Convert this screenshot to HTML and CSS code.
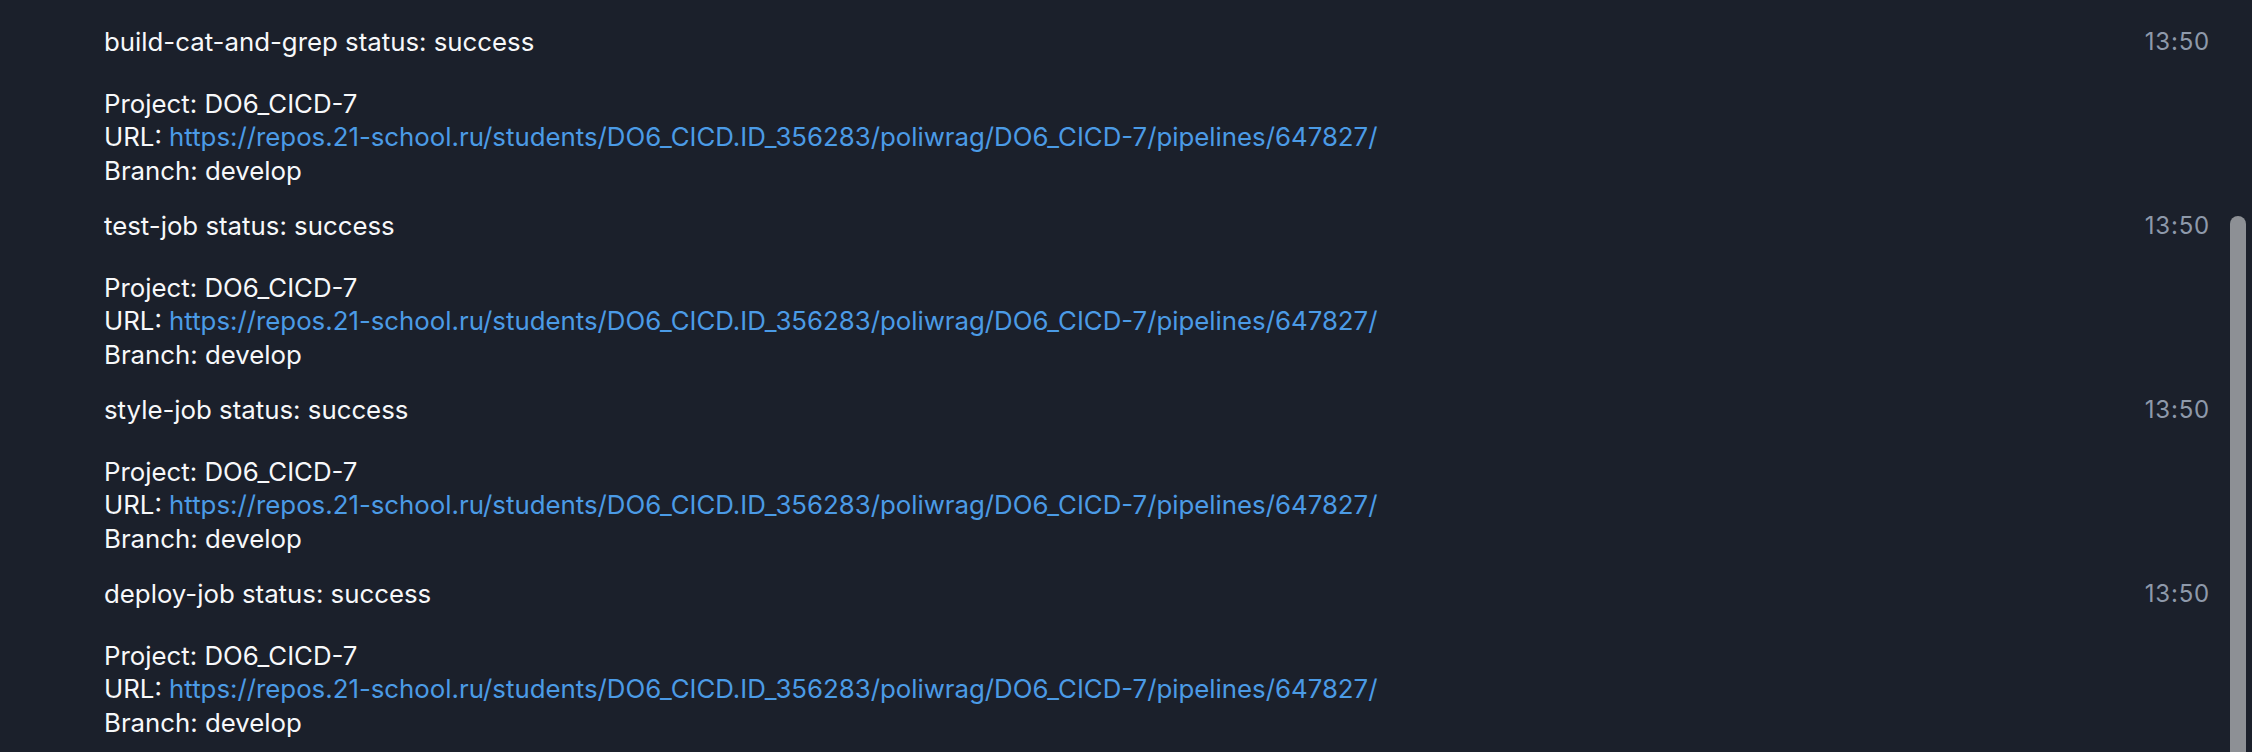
FILE: index.html
```html
<!DOCTYPE html>
<html>
<head>
<meta charset="utf-8">
<link rel="stylesheet" href="styles.css">
</head>
<body>
<div class="chat">
  <div class="msg">
    <div class="text">
      <div>build-cat-and-grep status: success</div>
      <div class="blank"></div>
      <div>Project: DO6_CICD-7</div>
      <div>URL: <a class="link">https://repos.21-school.ru/students/DO6_CICD.ID_356283/poliwrag/DO6_CICD-7/pipelines/647827/</a></div>
      <div>Branch: develop</div>
    </div>
    <div class="time">13:50</div>
  </div>
  <div class="msg">
    <div class="text">
      <div>test-job status: success</div>
      <div class="blank"></div>
      <div>Project: DO6_CICD-7</div>
      <div>URL: <a class="link">https://repos.21-school.ru/students/DO6_CICD.ID_356283/poliwrag/DO6_CICD-7/pipelines/647827/</a></div>
      <div>Branch: develop</div>
    </div>
    <div class="time">13:50</div>
  </div>
  <div class="msg">
    <div class="text">
      <div>style-job status: success</div>
      <div class="blank"></div>
      <div>Project: DO6_CICD-7</div>
      <div>URL: <a class="link">https://repos.21-school.ru/students/DO6_CICD.ID_356283/poliwrag/DO6_CICD-7/pipelines/647827/</a></div>
      <div>Branch: develop</div>
    </div>
    <div class="time">13:50</div>
  </div>
  <div class="msg">
    <div class="text">
      <div>deploy-job status: success</div>
      <div class="blank"></div>
      <div>Project: DO6_CICD-7</div>
      <div>URL: <a class="link">https://repos.21-school.ru/students/DO6_CICD.ID_356283/poliwrag/DO6_CICD-7/pipelines/647827/</a></div>
      <div>Branch: develop</div>
    </div>
    <div class="time">13:50</div>
  </div>
  <div class="scrollthumb"></div>
</div>
</body>
</html>
```

FILE: styles.css
```css
html, body {
  margin: 0;
  padding: 0;
  background: #1b202b;
  height: 100%;
  overflow: hidden;
}
.chat {
  position: relative;
  height: 752px;
  padding-top: 14px;
  box-sizing: border-box;
  font-family: Inter, "Noto Sans", sans-serif;
}
.msg {
  display: flex;
  justify-content: space-between;
  align-items: flex-start;
  padding: 11px 42px 11px 104px;
}
.text {
  color: #f7f8fa;
  font-size: 25.8px;
  line-height: 33.5px;
}
.blank {
  height: 28px;
}
.link {
  color: #4b9be6;
  text-decoration: none;
}
.time {
  color: #8e99aa;
  font-size: 24px;
  letter-spacing: 0.8px;
  line-height: 33.5px;
}
.scrollthumb {
  position: absolute;
  left: 2230px;
  top: 216px;
  width: 16px;
  height: 560px;
  border-radius: 8px;
  background: #8d9095;
}
```
